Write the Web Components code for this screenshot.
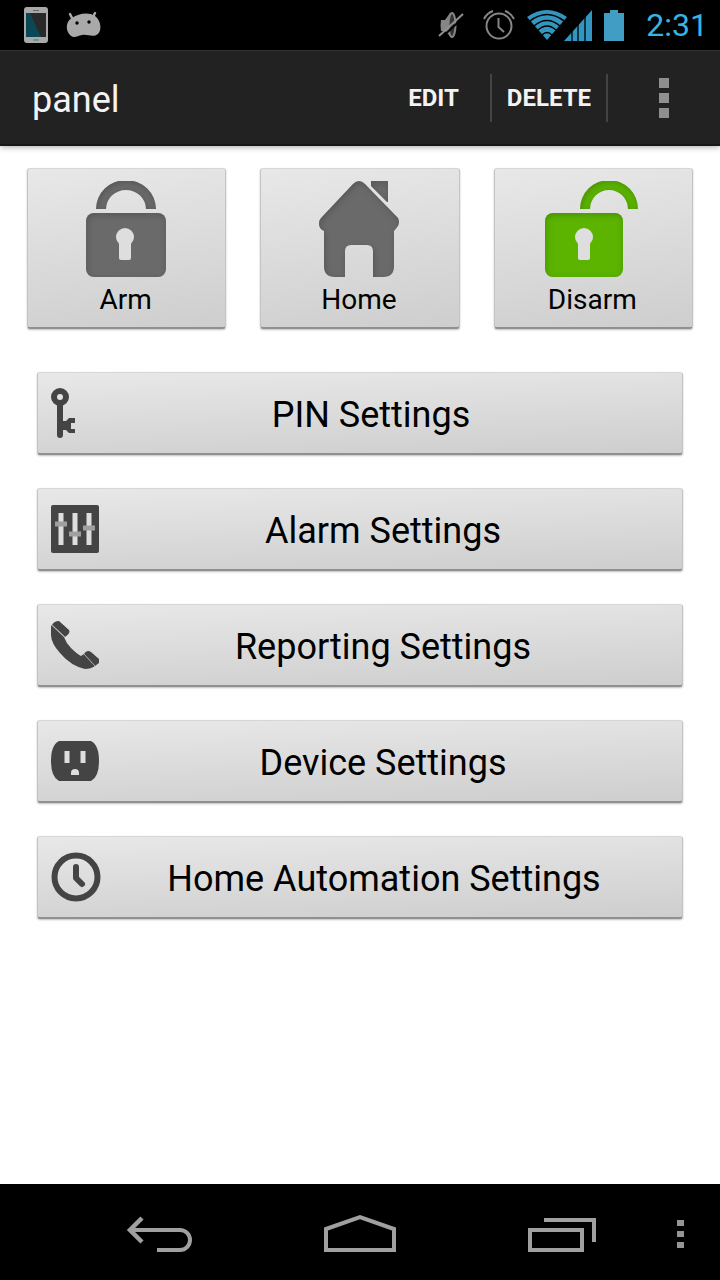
<!DOCTYPE html>
<html lang="en">
<head>
<meta charset="utf-8">
<meta name="viewport" content="width=device-width, initial-scale=1">
<title>panel</title>
<style>
  body { margin: 0; background: #fff; font-family: Roboto, "Noto Sans", sans-serif; color: #000; }
</style>
</head>
<body>
<alarm-screen></alarm-screen>
<script>
const keyhole = `<circle cx="39" cy="56" r="9" fill="#dedede"/><rect x="33" y="58" width="12" height="21" rx="2" fill="#dedede"/>`;
const inset = `<filter id="inset" x="-5%" y="-5%" width="110%" height="110%">
  <feComponentTransfer in="SourceAlpha"><feFuncA type="table" tableValues="1 0"/></feComponentTransfer>
  <feGaussianBlur stdDeviation="3"/><feOffset dx="1" dy="2" result="shade"/>
  <feFlood flood-color="#000" flood-opacity=".4"/><feComposite in2="shade" operator="in"/>
  <feComposite in2="SourceAlpha" operator="in" result="edge"/>
  <feMerge><feMergeNode in="SourceGraphic"/><feMergeNode in="edge"/></feMerge></filter>`;

const icons = {
  phone: [24, 36, `<rect width="24" height="36" rx="3" fill="#a9a9a9"/><rect x="2" y="6" width="20" height="24" fill="#292929"/><path d="M2 6H6L17 30H2Z" fill="#0c4756"/><path d="M9 3.5H15" stroke="#666"/><rect x="9" y="32" width="6" height="2" rx="1" fill="#709096"/>`],
  android: [36, 28, `<path d="M4 3L7 9M29 2L26 8" stroke="#a9a9a9" stroke-width="2.500" stroke-linecap="round"/><path d="M6 7C13 2 23 1 29 5C35 9 36 19 32 23C27 27 22 23 16 24C11 25 8 28 4 24C-1 19 0 10 6 7Z" fill="#a9a9a9"/><circle cx="11" cy="12" r="1.700"/><circle cx="23" cy="11" r="1.700"/>`],
  mute: [26, 28, `<path d="M3 9H7L12 2V25L7 20H3Q2 14 3 9Z" fill="#858585"/><ellipse cx="14" cy="14" rx="3.500" ry="12" fill="#333" stroke="#858585" stroke-width="2"/><path d="M2 28L27 5" stroke="#000" stroke-width="2"/><path d="M1 25L25 3" stroke="#909090" stroke-width="2"/>`],
  alarm: [32, 30, `<g fill="none" stroke="#858585" stroke-width="2"><circle cx="16" cy="16" r="12.500"/><path d="M15.500 8V17L21 22M1 9Q4 3 10 1M31 9Q28 3 22 1"/></g>`],
  wifi: [40, 30, `<path d="M20 30L0 7Q20 -7 40 7Z" fill="#3396c0"/><g fill="none" stroke="#000" stroke-width="1.600"><path d="M3 11Q20 -2 37 11M7 16Q20 5 33 16M11 20Q20 12 29 20M15 25Q20 20 25 25"/></g>`],
  signal: [28, 31, `<path d="M0 31L28 0V31Z" fill="#3396c0"/><path d="M8 20V31M14 12V31M21 5V31" stroke="#000" stroke-width="1.300"/>`],
  battery: [20, 31, `<path d="M0 3H6V0H14V3H20V31H0Z" fill="#419dc4"/>`],
  lock: [80, 96, `${inset}<g fill="#6a6a6a" filter="url(#inset)"><rect y="32" width="80" height="64" rx="8"/><path d="M10 28A30 29 0 0 1 70 28H60A20 19 0 0 0 20 28Z"/></g>${keyhole}`],
  home: [80, 96, `${inset}<g fill="#6a6a6a" filter="url(#inset)"><path d="M34 3Q40 -3 46 3L79 37Q81 41 79 45Q76 49 75 50V85Q75 96 64 96H54V70Q54 64 48 64H32Q26 64 26 70V96H16Q5 96 5 85V50Q0 48 0 43Q0 39 2 37Z"/><path d="M52 0H69V21Q67 21 66 19L52 5Z"/></g>`],
  unlock: [94, 96, `${inset}<g fill="#5bb300" filter="url(#inset)"><rect y="32" width="78" height="64" rx="8"/><path d="M35 28A29 29 0 0 1 93 28H83A19 19 0 0 0 45 28Z"/></g>${keyhole}`],
  key: [24, 50, `<g fill="none" stroke="#444"><circle cx="9" cy="9" r="6" stroke-width="6"/><path d="M9 16V47" stroke-width="6" stroke-linecap="round"/></g><path d="M9 33H15L18 30H24V35H20V41H24V45H18L15 42H9Z" fill="#444"/>`],
  sliders: [48, 48, `<rect width="48" height="48" rx="2" fill="#444"/><path d="M10 8V40M24 8V40M38 8V40" stroke="#dedede" stroke-width="5"/><path d="M4 19H16M18 29H30M32 23H44" stroke="#a0a0a0" stroke-width="5"/>`],
  call: [48, 48, `<path d="M0 4L13 16Q15 22 20 27Q26 33 30 35L33 33L44 45Q40 48 34 48Q20 45 9 32Q0 22 0 14Z" fill="#444"/><path d="M1 4Q3 0 8 0L18 9Q20 12 14 16ZM33 33Q36 28 40 31L48 38V42L44 45Z" fill="#444"/><path d="M1 4L14 16M33 33L44 45" stroke="#aaa"/>`],
  outlet: [48, 40, `<path d="M8 0H40Q48 4 48 20Q48 36 40 40H8Q0 36 0 20Q0 4 8 0Z" fill="#444"/><path d="M16 10V22M32 10V22" stroke="#dedede" stroke-width="5"/><path d="M20 34V32Q20 28 24 28Q28 28 28 32V34Z" fill="#dedede"/>`],
  clock: [50, 50, `<g fill="none" stroke="#444"><circle cx="25" cy="25" r="21.500" stroke-width="6"/><path d="M25 15V26L31 32" stroke-width="6" stroke-linecap="round" stroke-linejoin="round"/></g>`],
  back: [70, 38, `<g fill="none" stroke="#a0a0a0" stroke-width="4"><path d="M8 16H57A10 10 0 0 1 57 36H34"/><path d="M19 4L7 16L19 28" stroke-width="4.500"/></g>`],
  house: [72, 38, `<path d="M2 15L36 3L70 15V36H2Z" fill="none" stroke="#a0a0a0" stroke-width="4"/>`],
  recent: [68, 38, `<path d="M2 16H54V36H2ZM16 6H66V28" fill="none" stroke="#a0a0a0" stroke-width="4"/>`],
  more: [10, 40, `<path d="M0 0H10V10H0ZM0 15H10V25H0ZM0 30H10V40H0Z" fill="#8f8f8f"/>`],
  menu: [8, 30, `<path d="M0 2H7V8H0ZM0 13H7V19H0ZM0 24H7V30H0Z" fill="#959595"/>`]
};

function define(name, html) {
  const template = document.createElement("template");
  template.innerHTML = html;
  customElements.define(name, class extends HTMLElement {
    constructor() {
      super();
      this.attachShadow({ mode: "open" }).append(template.content.cloneNode(true));
    }
  });
}

customElements.define("ui-icon", class extends HTMLElement {
  connectedCallback() {
    if (this.shadowRoot) return;
    const [w, h, body] = icons[this.getAttribute("name")];
    this.attachShadow({ mode: "open" }).innerHTML =
      `<style>:host{display:block;flex:none}svg{display:block}</style>
       <svg width="${w}" height="${h}" viewBox="0 0 ${w} ${h}" aria-hidden="true">${body}</svg>`;
  }
});

define("status-bar", `
<style>
  :host { display: flex; align-items: center; height: 50px; padding: 0 12px 0 24px; background: #000; color: #35b5e5; }
  .notices { display: flex; align-items: center; gap: 18px; flex: 1; }
  .system { display: flex; align-items: center; }
  .mute { margin-right: 19px; }
  .alarm { margin-right: 12px; }
  .wifi { margin-right: -3px; }
  .signal { margin-right: 12px; }
  .battery { margin-right: 22px; }
  time { font-size: 32px; line-height: 50px; }
</style>
<div class="notices"><ui-icon name="phone"></ui-icon><ui-icon name="android"></ui-icon></div>
<div class="system">
  <ui-icon class="mute" name="mute"></ui-icon><ui-icon class="alarm" name="alarm"></ui-icon>
  <ui-icon class="wifi" name="wifi"></ui-icon><ui-icon class="signal" name="signal"></ui-icon>
  <ui-icon class="battery" name="battery"></ui-icon><time>2:31</time>
</div>`);

define("action-bar", `
<style>
  :host { display: flex; align-items: center; height: 96px; box-sizing: border-box; padding-left: 32px; background: #222;
    border-top: 1px solid #333; border-bottom: 2px solid #181818; box-shadow: 0 1px 6px rgba(0,0,0,.35); color: #f3f3f3; }
  h1 { flex: 1; margin: 0; padding-top: 4px; font-size: 36px; line-height: 48px; font-weight: 400; }
  button { height: 48px; margin: 0; padding: 0 15px; border: 0; background: none; color: inherit; font: 700 24px/48px Roboto, sans-serif; }
  .item { border-right: 2px solid #444; }
  .first { padding: 0 31px; }
  .more { padding: 0 51px; }
</style>
<h1><slot></slot></h1>
<button class="item first">EDIT</button>
<button class="item">DELETE</button>
<button class="more" aria-label="More options"><ui-icon name="more"></ui-icon></button>`);

const buttonSkin = `
  button { display: flex; width: 100%; box-sizing: border-box; border: 1px solid #c4c4c4; border-top-color: #d6d6d6; border-bottom: 2px solid #909090; border-radius: 3px;
    background: linear-gradient(178deg, #e8e8e8, #dbdbdb 50%, #cecece); box-shadow: 0 1px 2px rgba(0,0,0,.25); color: #000; align-items: center; }`;

define("mode-button", `
<style>
  :host { display: block; }
  ${buttonSkin}
  button { height: 161px; flex-direction: column; padding: 12px 2px 0 0; background: linear-gradient(172deg, #e8e8e8, #dbdbdb 50%, #cecece); font: 400 28px/46px Roboto, sans-serif; }
</style>
<button><slot name="icon"></slot><slot></slot></button>`);

define("settings-button", `
<style>
  :host { display: block; }
  ${buttonSkin}
  button { height: 83px; padding: 0 15px 0 13px; font: 400 36px/48px Roboto, sans-serif; }
  span { flex: 1; padding-top: 4px; text-align: center; }
</style>
<button><slot name="icon"></slot><span><slot></slot></span></button>`);

define("nav-bar", `
<style>
  :host { display: grid; grid-template-columns: 57px 1fr 1fr 1fr 57px; height: 96px; background: #000; }
  button { display: flex; align-items: center; justify-content: center; padding: 2px 0 0; border: 0; background: none; }
  .menu { justify-content: flex-start; padding-left: 14px; }
</style>
<span></span>
<button aria-label="Back"><ui-icon name="back"></ui-icon></button>
<button aria-label="Home"><ui-icon name="house"></ui-icon></button>
<button aria-label="Recent apps"><ui-icon name="recent"></ui-icon></button>
<button class="menu" aria-label="Menu"><ui-icon name="menu"></ui-icon></button>`);

define("alarm-screen", `
<style>
  :host { display: flex; flex-direction: column; min-height: 100vh; }
  main { flex: 1; padding: 22px 27px; }
  .modes { display: grid; grid-template-columns: repeat(3, 1fr); gap: 34px; }
  .settings { display: grid; gap: 33px; margin: 43px 10px 0; }
</style>
<status-bar></status-bar>
<action-bar>panel</action-bar>
<main>
  <div class="modes">
    <mode-button><ui-icon slot="icon" name="lock"></ui-icon>Arm</mode-button>
    <mode-button><ui-icon slot="icon" name="home"></ui-icon>Home</mode-button>
    <mode-button><ui-icon slot="icon" name="unlock"></ui-icon>Disarm</mode-button>
  </div>
  <div class="settings">
    <settings-button><ui-icon slot="icon" name="key"></ui-icon>PIN Settings</settings-button>
    <settings-button><ui-icon slot="icon" name="sliders"></ui-icon>Alarm Settings</settings-button>
    <settings-button><ui-icon slot="icon" name="call"></ui-icon>Reporting Settings</settings-button>
    <settings-button><ui-icon slot="icon" name="outlet"></ui-icon>Device Settings</settings-button>
    <settings-button><ui-icon slot="icon" name="clock"></ui-icon>Home Automation Settings</settings-button>
  </div>
</main>
<nav-bar></nav-bar>`);
</script>
</body>
</html>
